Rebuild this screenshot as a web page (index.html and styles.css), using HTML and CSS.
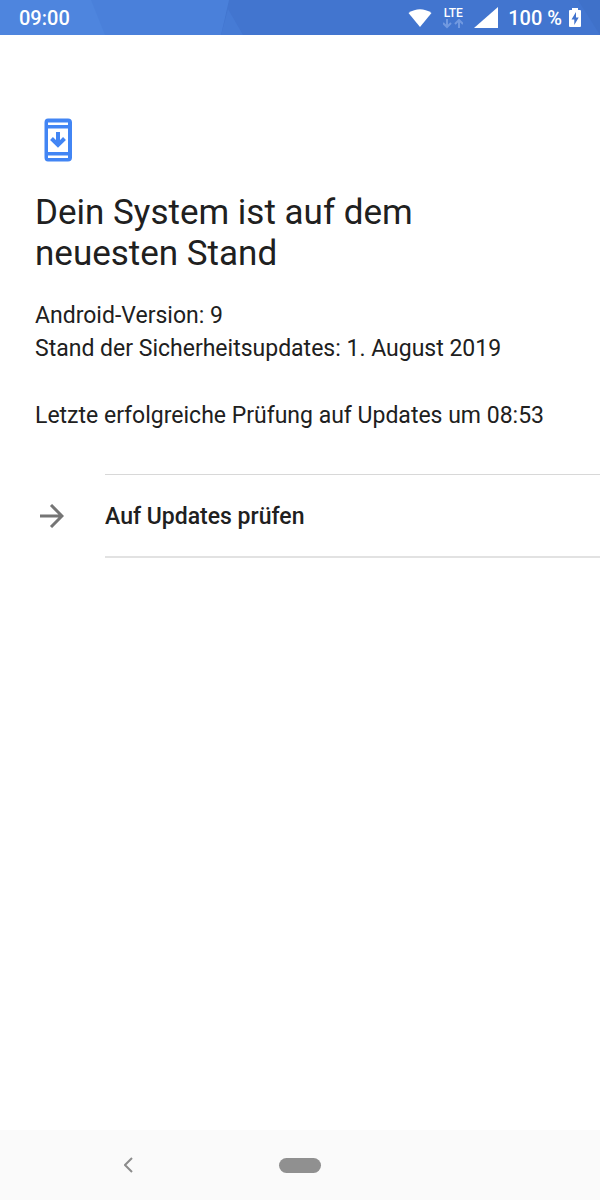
FILE: index.html
```html
<!DOCTYPE html>
<html lang="de">
<head>
  <meta charset="UTF-8" />
  <meta name="viewport" content="width=device-width, initial-scale=1.0"/>
  <title>Systemupdate</title>
  <link rel="stylesheet" href="styles.css">
</head>
<body>
  <header class="status-bar">
    <svg class="status-pattern" viewBox="0 0 600 35" preserveAspectRatio="none" aria-hidden="true">
      <path d="M0 0H91L105 35H0z" fill="#4e85de"/>
      <path d="M229 0H600V35H221z" fill="#4275cf"/>
      <path d="M228 9L243 35H221z" fill="#467bd5"/>
      <path d="M578 0H600V35z" fill="#3f71c9"/>
    </svg>
    <span class="clock">09:00</span>
    <div class="status-icons">
      <svg class="wifi" width="24" height="18" viewBox="0 0 24 18" aria-hidden="true">
        <path d="M0.500 4Q12-3.500 23.500 4L12 18z" fill="#fff"/>
      </svg>
      <div class="network">
        <span>LTE</span>
        <svg width="20" height="10" viewBox="0 0 20 10" fill="none" stroke="#7199e0" stroke-width="2" aria-hidden="true">
          <path d="M4 0V8M0 4L4 8L8 4M16 9V1M12 5L16 1L20 5"/>
        </svg>
      </div>
      <svg class="signal" width="24" height="21" viewBox="0 0 24 21" aria-hidden="true">
        <path d="M24 0V21H0z" fill="#fff"/>
      </svg>
      <span class="percent">100 %</span>
      <svg width="12" height="19" viewBox="0 0 12 19" aria-hidden="true">
        <path d="M3 0H9V2H11Q12 2 12 3V18Q12 19 11 19H1Q0 19 0 18V3Q0 2 1 2H3z" fill="#fff"/>
        <path d="M7 4L2.500 11.500H5.300V17L9.700 9.500H7z" fill="#4173cd"/>
      </svg>
    </div>
  </header>

  <main class="content">
    <section class="info">
      <svg class="update-icon" width="28" height="44" viewBox="0 0 28 44" aria-hidden="true">
        <path fill-rule="evenodd" d="M4 0.500H24Q28 0.500 28 4.500V39.500Q28 43.500 24 43.500H4Q0.500 43.500 0.500 39.500V4.500Q.5 .5 4 .5zM4 4.500V7H24V4.500zM4 10.500V34H24V10.500zM4 37.500V40H24V37.500z" fill="#4285f4"/>
        <path d="M14 14V27M7.500 20.500L14 27L20.500 20.500" fill="none" stroke="#4285f4" stroke-width="4"/>
      </svg>
      <h1>Dein System ist auf dem neuesten Stand</h1>
      <p>Android-Version: 9<br>Stand der Sicherheitsupdates: 1. August 2019</p>
      <p>Letzte erfolgreiche Prüfung auf Updates um 08:53</p>
    </section>

    <button class="check-row" type="button">
      <span class="check-icon">
        <svg width="24" height="24" viewBox="0 0 24 24" fill="none" stroke="#757575" stroke-width="3" aria-hidden="true">
          <path d="M0 12H22M11 1L22 12L11 23"/>
        </svg>
      </span>
      <span class="check-label">Auf Updates prüfen</span>
    </button>
  </main>

  <nav class="nav-bar">
    <button class="nav-back" type="button" aria-label="Zurück">
      <svg width="10" height="16" viewBox="0 0 10 16" fill="none" stroke="#8c8c8c" stroke-width="2" aria-hidden="true">
        <path d="M8 1L1 8L8 15"/>
      </svg>
    </button>
    <button class="nav-home" type="button" aria-label="Startbildschirm"><span class="pill"></span></button>
  </nav>
</body>
</html>
```
FILE: styles.css
```css
* {
  margin: 0;
  padding: 0;
  box-sizing: border-box;
}

body {
  min-height: 100vh;
  display: flex;
  flex-direction: column;
  background: #fff;
  color: #202020;
  font-family: Roboto, sans-serif;
}

svg {
  display: block;
}

button {
  border: none;
  background: none;
  color: inherit;
  font-family: inherit;
  cursor: pointer;
}

.status-bar {
  position: relative;
  height: 35px;
  padding: 0 19px;
  display: flex;
  justify-content: space-between;
  align-items: center;
  background: #4a80da;
  color: #fff;
  font-size: 20px;
  font-weight: 500;
}

.status-pattern {
  position: absolute;
  inset: 0;
  width: 100%;
  height: 100%;
}

.clock,
.status-icons {
  position: relative;
}

.status-icons {
  display: flex;
  align-items: center;
}

.wifi {
  margin-right: 11px;
}

.network {
  display: flex;
  flex-direction: column;
  align-items: center;
  margin-right: 11px;
  font-size: 12px;
  line-height: 12px;
}

.signal {
  margin-right: 10px;
}

.percent {
  margin-right: 7px;
}

.content {
  flex: 1;
}

.info {
  padding: 83px 35px 42px;
}

.update-icon {
  margin: 0 9px 30px;
}

h1 {
  max-width: 440px;
  margin-bottom: 25px;
  font-size: 35px;
  line-height: 41px;
  font-weight: 400;
}

p {
  font-size: 23px;
  line-height: 33px;
}

p + p {
  margin-top: 34px;
}

.check-row {
  width: 100%;
  display: flex;
  align-items: center;
  text-align: left;
}

.check-icon {
  width: 105px;
  padding-left: 40px;
}

.check-label {
  flex: 1;
  padding: 28px 0 26px;
  border-top: 1px solid #d8d8d8;
  border-bottom: 2px solid #e2e2e2;
  font-size: 23px;
  line-height: 27px;
  font-weight: 500;
}

.nav-bar {
  height: 70px;
  display: grid;
  grid-template-columns: 1fr 86px 1fr;
  background: #fafafa;
}

.nav-back,
.nav-home {
  display: flex;
  justify-content: center;
  align-items: center;
}

.pill {
  width: 42px;
  height: 15px;
  border-radius: 8px;
  background: #909090;
}
```
